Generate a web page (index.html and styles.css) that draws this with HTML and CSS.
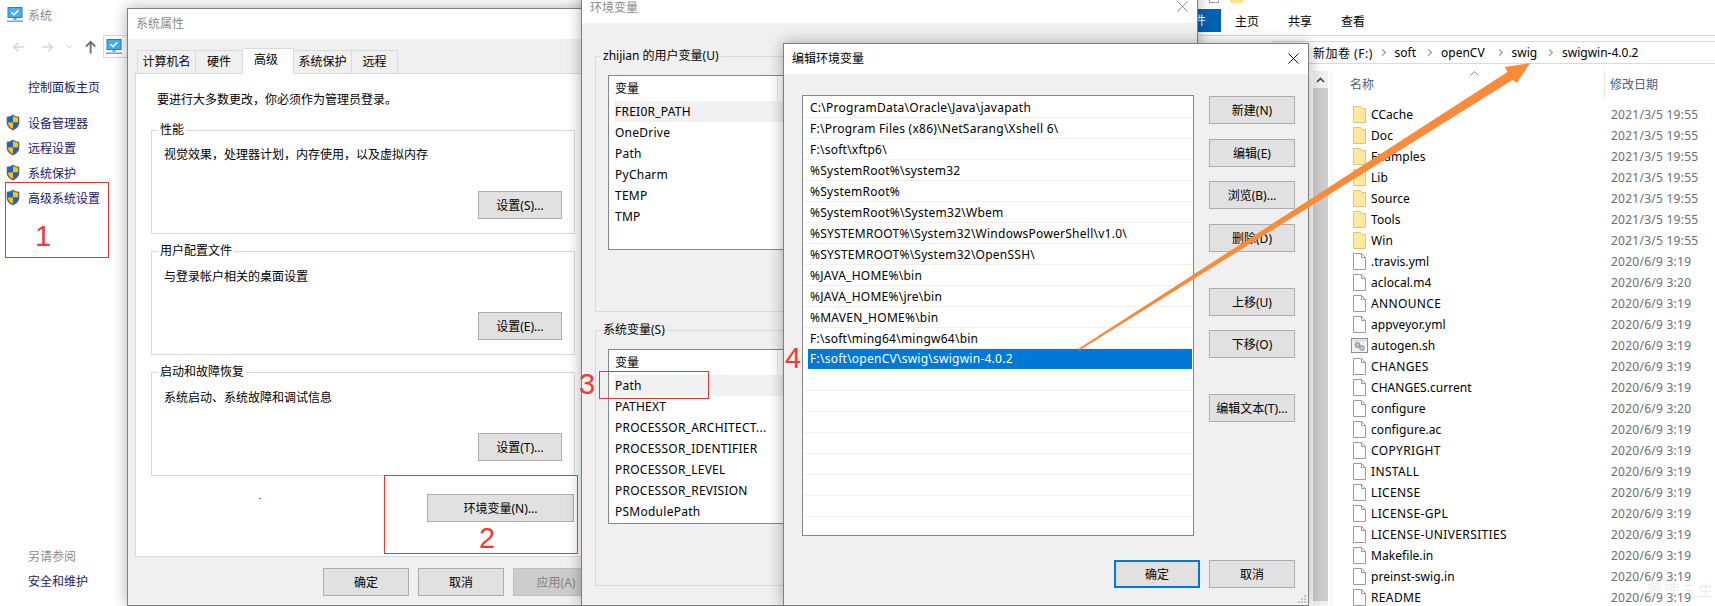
FILE: index.html
```html
<!DOCTYPE html>
<html lang="zh-CN">
<head>
<meta charset="utf-8">
<title>系统</title>
<link rel="stylesheet" href="styles.css">
</head>
<body>
<svg class="sprite" xmlns="http://www.w3.org/2000/svg">
  <symbol id="pc" viewBox="0 0 16 16">
    <rect x="1" y="0.5" width="14" height="10" fill="#46aef5" stroke="#2f7fb8"/>
    <path d="M4.5 5.2l2.5 2.5 4.5-4.5" fill="none" stroke="#fff" stroke-width="1.6"/>
    <rect x="6.5" y="11" width="3" height="2" fill="#8aa0b4"/>
    <rect x="0" y="13.5" width="16" height="1.5" fill="#8aa0b4"/>
  </symbol>
  <symbol id="shield" viewBox="0 0 14 17">
    <path d="M7 .5C5 2 3 2.6.7 2.8v6c0 3.4 2.6 6 6.3 7.7 3.7-1.700 6.300-4.300 6.300-7.700v-6C11 2.600 9 2 7 .5z" fill="#5a6470"/>
    <path d="M7 2C5.500 3 3.800 3.600 2 3.800V8.500h5z" fill="#1668c0"/>
    <path d="M7 2c1.500 1 3.200 1.600 5 1.800V8.500H7z" fill="#fcc21f"/>
    <path d="M2 8.500c0 2.900 2.100 4.900 5 6.300V8.500z" fill="#fcc21f"/>
    <path d="M12 8.500c0 2.900-2.100 4.900-5 6.300V8.500z" fill="#1668c0"/>
  </symbol>
  <symbol id="folder" viewBox="0 0 13 17">
    <path d="M.5.500h7l1.500 2h3.500v14H.5z" fill="#ffe9a1" stroke="#e2c46c"/>
  </symbol>
  <symbol id="doc" viewBox="0 0 13 17">
    <path d="M.5.500h8l4 4v12H.5z" fill="#fff" stroke="#9b9b9b"/>
    <path d="M8.500.500v4h4" fill="none" stroke="#9b9b9b"/>
  </symbol>
  <symbol id="script" viewBox="0 0 17 15">
    <rect x=".5" y=".5" width="16" height="14" fill="#f3f3f3" stroke="#8d8d8d"/>
    <rect x="1.500" y="1.500" width="14" height="2" fill="#d6dde4"/>
    <circle cx="6.500" cy="7" r="2.500" fill="#b9c2ca" stroke="#7d8a96"/>
    <circle cx="11" cy="10" r="2.300" fill="#c9d0d6" stroke="#7d8a96"/>
  </symbol>
</svg>

<main class="desktop">

  <section class="explorer">
    <div class="ex-top"><span class="qa-box"></span><span class="qa-folder"></span></div>
    <div class="ex-ribbon">
      <span class="ex-file">文件</span>
      <span class="ex-tab">主页</span>
      <span class="ex-tab">共享</span>
      <span class="ex-tab">查看</span>
    </div>
    <div class="ex-address">
      <span class="crumb crumb-drive">新加卷 (F:)</span><span class="chev"></span>
      <span class="crumb crumb-soft">soft</span><span class="chev"></span>
      <span class="crumb crumb-opencv">openCV</span><span class="chev"></span>
      <span class="crumb crumb-swig">swig</span><span class="chev"></span>
      <span class="crumb">swigwin-4.0.2</span>
    </div>
    <div class="ex-body">
      <div class="ex-scroll">
        <span class="ex-scroll-up"><svg width="9" height="6" viewBox="0 0 9 6"><path d="M1 5l3.500-3.500L8 5" fill="none" stroke="#444" stroke-width="1.600"/></svg></span>
        <span class="ex-scroll-thumb"></span>
      </div>
      <div class="ex-files">
        <div class="ex-head">
          <span class="ex-head-name">名称<svg class="caret" width="9" height="5" viewBox="0 0 9 5"><path d="M.5 4.500l4-4 4 4" fill="none" stroke="#8a8a8a"/></svg></span>
          <span class="ex-head-date">修改日期</span>
        </div>
        <div class="file"><svg class="ico"><use href="#folder"/></svg><span class="fname">CCache</span><span class="fdate">2021/3/5 19:55</span></div>
        <div class="file"><svg class="ico"><use href="#folder"/></svg><span class="fname">Doc</span><span class="fdate">2021/3/5 19:55</span></div>
        <div class="file"><svg class="ico"><use href="#folder"/></svg><span class="fname">Examples</span><span class="fdate">2021/3/5 19:55</span></div>
        <div class="file"><svg class="ico"><use href="#folder"/></svg><span class="fname">Lib</span><span class="fdate">2021/3/5 19:55</span></div>
        <div class="file"><svg class="ico"><use href="#folder"/></svg><span class="fname">Source</span><span class="fdate">2021/3/5 19:55</span></div>
        <div class="file"><svg class="ico"><use href="#folder"/></svg><span class="fname">Tools</span><span class="fdate">2021/3/5 19:55</span></div>
        <div class="file"><svg class="ico"><use href="#folder"/></svg><span class="fname">Win</span><span class="fdate">2021/3/5 19:55</span></div>
        <div class="file"><svg class="ico"><use href="#doc"/></svg><span class="fname">.travis.yml</span><span class="fdate">2020/6/9 3:19</span></div>
        <div class="file"><svg class="ico"><use href="#doc"/></svg><span class="fname">aclocal.m4</span><span class="fdate">2020/6/9 3:20</span></div>
        <div class="file"><svg class="ico"><use href="#doc"/></svg><span class="fname fname-caps">ANNOUNCE</span><span class="fdate">2020/6/9 3:19</span></div>
        <div class="file"><svg class="ico"><use href="#doc"/></svg><span class="fname">appveyor.yml</span><span class="fdate">2020/6/9 3:19</span></div>
        <div class="file"><svg class="ico ico-script"><use href="#script"/></svg><span class="fname">autogen.sh</span><span class="fdate">2020/6/9 3:19</span></div>
        <div class="file"><svg class="ico"><use href="#doc"/></svg><span class="fname fname-caps">CHANGES</span><span class="fdate">2020/6/9 3:19</span></div>
        <div class="file"><svg class="ico"><use href="#doc"/></svg><span class="fname">CHANGES.current</span><span class="fdate">2020/6/9 3:19</span></div>
        <div class="file"><svg class="ico"><use href="#doc"/></svg><span class="fname">configure</span><span class="fdate">2020/6/9 3:20</span></div>
        <div class="file"><svg class="ico"><use href="#doc"/></svg><span class="fname">configure.ac</span><span class="fdate">2020/6/9 3:19</span></div>
        <div class="file"><svg class="ico"><use href="#doc"/></svg><span class="fname fname-caps">COPYRIGHT</span><span class="fdate">2020/6/9 3:19</span></div>
        <div class="file"><svg class="ico"><use href="#doc"/></svg><span class="fname fname-caps">INSTALL</span><span class="fdate">2020/6/9 3:19</span></div>
        <div class="file"><svg class="ico"><use href="#doc"/></svg><span class="fname fname-caps">LICENSE</span><span class="fdate">2020/6/9 3:19</span></div>
        <div class="file"><svg class="ico"><use href="#doc"/></svg><span class="fname fname-caps">LICENSE-GPL</span><span class="fdate">2020/6/9 3:19</span></div>
        <div class="file"><svg class="ico"><use href="#doc"/></svg><span class="fname fname-caps">LICENSE-UNIVERSITIES</span><span class="fdate">2020/6/9 3:19</span></div>
        <div class="file"><svg class="ico"><use href="#doc"/></svg><span class="fname">Makefile.in</span><span class="fdate">2020/6/9 3:19</span></div>
        <div class="file"><svg class="ico"><use href="#doc"/></svg><span class="fname">preinst-swig.in</span><span class="fdate">2020/6/9 3:19</span></div>
        <div class="file"><svg class="ico"><use href="#doc"/></svg><span class="fname fname-caps">README</span><span class="fdate">2020/6/9 3:19</span></div>
      </div>
    </div>
    <span class="watermark">腾理三生</span>
  </section>

  <aside class="sys-side">
    <div class="side-title"><svg class="pc"><use href="#pc"/></svg><span class="inactive">系统</span></div>
    <div class="side-nav">
      <svg width="14" height="12" viewBox="0 0 14 12" class="nav-back"><path d="M13 6H2M6.500 1.500L2 6l4.500 4.500" fill="none" stroke="#d8d8d8" stroke-width="1.800"/></svg>
      <svg width="14" height="12" viewBox="0 0 14 12" class="nav-fwd"><path d="M1 6h11M7.500 1.500L12 6l-4.500 4.500" fill="none" stroke="#d8d8d8" stroke-width="1.800"/></svg>
      <svg width="7" height="5" viewBox="0 0 7 5" class="nav-down"><path d="M.5 1l3 3 3-3" fill="none" stroke="#c8c8c8"/></svg>
      <svg width="12" height="14" viewBox="0 0 12 14" class="nav-up"><path d="M6 14V2M1 6.500L6 1.500l5 5" fill="none" stroke="#6b6b6b" stroke-width="1.900"/></svg>
      <span class="nav-loc"><svg class="pc"><use href="#pc"/></svg></span>
    </div>
    <a class="side-home">控制面板主页</a>
    <ul class="side-list">
      <li><svg class="shield"><use href="#shield"/></svg>设备管理器</li>
      <li><svg class="shield"><use href="#shield"/></svg>远程设置</li>
      <li><svg class="shield"><use href="#shield"/></svg>系统保护</li>
      <li><svg class="shield"><use href="#shield"/></svg>高级系统设置</li>
    </ul>
    <div class="side-foot">
      <span class="side-see">另请参阅</span>
      <span class="side-sec">安全和维护</span>
    </div>
  </aside>

  <section class="win win-props">
    <header class="titlebar"><span class="inactive">系统属性</span></header>
    <div class="props-body">
      <div class="tabs">
        <span class="tab tab-w59">计算机名</span>
        <span class="tab tab-w47">硬件</span>
        <span class="tab tab-active">高级</span>
        <span class="tab tab-w58">系统保护</span>
        <span class="tab tab-w46">远程</span>
      </div>
      <div class="panel">
        <p class="panel-note">要进行大多数更改，你必须作为管理员登录。</p>
        <fieldset class="group group-first">
          <legend>性能</legend>
          <p class="group-text">视觉效果，处理器计划，内存使用，以及虚拟内存</p>
          <div class="group-actions"><button class="btn btn-set">设置(S)...</button></div>
        </fieldset>
        <fieldset class="group">
          <legend>用户配置文件</legend>
          <p class="group-text">与登录帐户相关的桌面设置</p>
          <div class="group-actions"><button class="btn btn-set">设置(E)...</button></div>
        </fieldset>
        <fieldset class="group">
          <legend>启动和故障恢复</legend>
          <p class="group-text">系统启动、系统故障和调试信息</p>
          <div class="group-actions"><button class="btn btn-set">设置(T)...</button></div>
        </fieldset>
        <div class="env-row"><button class="btn btn-env">环境变量(N)...</button></div>
      </div>
      <div class="props-foot">
        <button class="btn btn-foot">确定</button>
        <button class="btn btn-foot">取消</button>
        <button class="btn btn-foot btn-disabled">应用(A)</button>
      </div>
    </div>
  </section>

  <section class="win win-env">
    <header class="titlebar titlebar-env"><span class="inactive">环境变量</span>
      <svg class="close" width="11" height="11" viewBox="0 0 11 11"><path d="M.5.500l10 10M10.500.500l-10 10" stroke="#8f8f8f" fill="none"/></svg>
    </header>
    <div class="env-body">
      <fieldset class="vargroup vargroup-user">
        <legend>zhijian 的用户变量(U)</legend>
        <div class="varlist">
          <div class="varhead"><span>变量</span></div>
          <div class="var var-hl">FREI0R_PATH</div>
          <div class="var">OneDrive</div>
          <div class="var">Path</div>
          <div class="var">PyCharm</div>
          <div class="var">TEMP</div>
          <div class="var">TMP</div>
        </div>
      </fieldset>
      <fieldset class="vargroup">
        <legend>系统变量(S)</legend>
        <div class="varlist">
          <div class="varhead"><span>变量</span></div>
          <div class="var var-hl">Path</div>
          <div class="var">PATHEXT</div>
          <div class="var">PROCESSOR_ARCHITECT...</div>
          <div class="var">PROCESSOR_IDENTIFIER</div>
          <div class="var">PROCESSOR_LEVEL</div>
          <div class="var">PROCESSOR_REVISION</div>
          <div class="var">PSModulePath</div>
        </div>
      </fieldset>
    </div>
  </section>

  <section class="win win-edit">
    <header class="titlebar titlebar-edit"><span>编辑环境变量</span>
      <svg class="close" width="11" height="11" viewBox="0 0 11 11"><path d="M.5.500l10 10M10.500.500l-10 10" stroke="#111" fill="none"/></svg>
    </header>
    <div class="edit-body">
      <div class="edit-main">
        <div class="pathlist">
          <div class="path"><span>C:\ProgramData\Oracle\Java\javapath</span></div>
          <div class="path"><span>F:\Program Files (x86)\NetSarang\Xshell 6\</span></div>
          <div class="path"><span>F:\soft\xftp6\</span></div>
          <div class="path"><span>%SystemRoot%\system32</span></div>
          <div class="path"><span>%SystemRoot%</span></div>
          <div class="path"><span>%SystemRoot%\System32\Wbem</span></div>
          <div class="path"><span>%SYSTEMROOT%\System32\WindowsPowerShell\v1.0\</span></div>
          <div class="path"><span>%SYSTEMROOT%\System32\OpenSSH\</span></div>
          <div class="path"><span>%JAVA_HOME%\bin</span></div>
          <div class="path"><span>%JAVA_HOME%\jre\bin</span></div>
          <div class="path"><span>%MAVEN_HOME%\bin</span></div>
          <div class="path"><span>F:\soft\ming64\mingw64\bin</span></div>
          <div class="path path-selected"><span>F:\soft\openCV\swig\swigwin-4.0.2</span></div>
          <div class="path"></div><div class="path"></div><div class="path"></div><div class="path"></div><div class="path"></div><div class="path"></div><div class="path"></div>
        </div>
        <div class="edit-actions">
          <button class="btn btn-edit">新建(N)</button>
          <button class="btn btn-edit">编辑(E)</button>
          <button class="btn btn-edit">浏览(B)...</button>
          <button class="btn btn-edit">删除(D)</button>
          <button class="btn btn-edit btn-break">上移(U)</button>
          <button class="btn btn-edit">下移(O)</button>
          <button class="btn btn-edit btn-break">编辑文本(T)...</button>
        </div>
      </div>
      <div class="edit-foot">
        <button class="btn btn-edit btn-default">确定</button>
        <button class="btn btn-edit">取消</button>
      </div>
    </div>
    <svg class="grip" width="10" height="10" viewBox="0 0 10 10"><path d="M7 1h2v2H7zM4 4h2v2H4zM7 4h2v2H7zM1 7h2v2H1zM4 7h2v2H4zM7 7h2v2H7z" fill="#c4c4c4"/></svg>
  </section>

  <span class="mark mark-1"></span>
  <span class="num num-1">1</span>
  <span class="mark mark-2"></span>
  <span class="num num-2">2</span>
  <span class="mark mark-3"></span>
  <span class="num num-3">3</span>
  <span class="num num-4">4</span>
  <span class="speck"></span>

  <svg class="arrow" width="1715" height="606" viewBox="0 0 1715 606">
    <polygon points="1078,349 1507.500,72 1505,67 1530,63 1517,83 1512.500,80 1080,350" fill="#f98b3a"/>
  </svg>
</main>
</body>
</html>
```

FILE: styles.css
```css
* { box-sizing: border-box; }
html, body { margin: 0; padding: 0; }
body {
  font-family: "Noto Sans", "Noto Sans CJK SC", sans-serif;
  font-size: 12px;
  color: #000;
  background: #fff;
}
p, ul { margin: 0; padding: 0; }
.sprite { display: none; }
.desktop {
  position: relative;
  width: 1715px;
  height: 606px;
  overflow: hidden;
  background: #fff;
}
.inactive { color: #8c8c8c; }

/* windows on the desktop */
.win {
  position: absolute;
  background: #f0f0f0;
  border: 1px solid #7f8084;
  box-shadow: 0 0 14px rgba(0, 0, 0, .32);
  display: flex;
  flex-direction: column;
}
.titlebar {
  height: 30px;
  flex: none;
  background: #fff;
  display: flex;
  align-items: center;
  justify-content: space-between;
  padding: 0 10px 2px 8px;
}
.btn {
  font: inherit;
  color: #000;
  background: #e1e1e1;
  border: 1px solid #adadad;
  height: 28px;
  padding: 0;
  flex: none;
}

/* left: system control panel */
.sys-side {
  position: absolute;
  left: 0;
  top: 0;
  width: 128px;
  height: 606px;
  display: flex;
  flex-direction: column;
  background: #fff;
}
.pc { width: 16px; height: 16px; display: block; flex: none; }
.side-title {
  height: 30px;
  padding-left: 7px;
  display: flex;
  align-items: center;
  gap: 5px;
}
.side-nav {
  height: 23px;
  margin-top: 5px;
  display: flex;
  align-items: center;
  padding-left: 12px;
}
.nav-fwd { margin-left: 16px; }
.nav-down { margin-left: 12px; }
.nav-up { margin-left: 12px; }
.nav-loc {
  margin-left: 7px;
  height: 23px;
  width: 26px;
  border: 1px solid #d9d9d9;
  display: flex;
  align-items: center;
  padding-left: 2px;
}
.side-home {
  display: block;
  margin: 20px 0 0 28px;
  line-height: 20px;
  color: #1a1a66;
}
.side-list {
  list-style: none;
  margin-top: 12px;
  padding-left: 6px;
  color: #1a1a66;
}
.side-list li {
  height: 25px;
  display: flex;
  align-items: center;
  gap: 8px;
}
.shield { width: 14px; height: 17px; flex: none; }
.side-foot {
  margin-top: auto;
  padding: 0 0 12px 28px;
  display: flex;
  flex-direction: column;
}
.side-foot span { height: 25px; line-height: 25px; }
.side-see { color: #8c8c8c; }
.side-sec { color: #1a1a66; }

/* system properties */
.win-props { left: 127px; top: 8px; width: 480px; height: 598px; }
.props-body { flex: 1; padding: 9px 0 0 7px; }
.tabs {
  display: flex;
  align-items: flex-end;
  height: 25px;
  margin-left: 2px;
  position: relative;
  z-index: 1;
}
.tab {
  height: 23px;
  line-height: 22px;
  border: 1px solid #d9d9d9;
  border-bottom: 0;
  border-left: 0;
  background: #f0f0f0;
  text-align: center;
  flex: none;
}
.tab-w59 { width: 59px; border-left: 1px solid #d9d9d9; }
.tab-w47 { width: 47px; }
.tab-w58 { width: 58px; }
.tab-w46 { width: 46px; }
.tab-active {
  width: 51px;
  height: 26px;
  margin-bottom: -1px;
  line-height: 22px;
  background: #fff;
  padding-right: 4px;
}
.panel {
  width: 470px;
  height: 484px;
  background: #fff;
  border: 1px solid #d9d9d9;
  padding: 16px 0 0 15px;
}
.panel-note { line-height: 20px; margin-left: 6px; }
.group {
  width: 424px;
  height: 112px;
  margin: 9px 0 0;
  padding: 0 12px 0 12px;
  border: 1px solid #d9d9d9;
  min-width: 0;
}
.group-first { margin-top: 12px; }
.group legend {
  padding: 0 2px;
  margin-left: -6px;
  line-height: 16px;
}
.vargroup legend {
  padding: 0 2px;
  margin-left: -7px;
  line-height: 16px;
}
.group-text { line-height: 16px; padding-top: 10px; }
.group-actions {
  margin-top: 27px;
  display: flex;
  justify-content: flex-end;
}
.group-first .group-text { padding-top: 9px; }
.group-first .group-actions { margin-top: 28px; }
.btn-set { width: 84px; }
.env-row {
  width: 424px;
  margin-top: 18px;
  padding-right: 1px;
  display: flex;
  justify-content: flex-end;
}
.btn-env { width: 147px; }
.props-foot {
  margin: 11px 0 0 188px;
  display: flex;
  gap: 9px;
}
.btn-foot { width: 86px; }
.btn-disabled { background: #ccc; border-color: #bfbfbf; color: #838383; }

/* environment variables */
.win-env { left: 581px; top: -8px; width: 617px; height: 614px; }
.titlebar-env { padding-right: 9px; padding-bottom: 3px; }
.env-body { flex: 1; padding: 25px 0 0 13px; }
.vargroup {
  width: 590px;
  height: 264px;
  margin: 10px 0 0;
  padding: 11px 0 0 12px;
  border: 1px solid #d9d9d9;
  min-width: 0;
}
.vargroup-user { margin-top: 0; }
.varlist {
  width: 560px;
  height: 175px;
  background: #fff;
  border: 1px solid #828790;
  padding-left: 5px;
}
.varhead {
  height: 25px;
  line-height: 25px;
  padding-left: 1px;
  width: 164px;
  border-right: 1px solid #e5e5e5;
}
.var {
  height: 21px;
  line-height: 21px;
  padding-left: 1px;
  letter-spacing: .25px;
}
.var-hl { background: #f1f1f1; }

/* edit dialog */
.win-edit { left: 783px; top: 43px; width: 526px; height: 563px; }
.titlebar-edit { padding-right: 9px; }
.edit-body { flex: 1; padding: 21px 13px 0 18px; }
.edit-main { display: flex; gap: 15px; }
.pathlist {
  width: 392px;
  height: 441px;
  background: #fff;
  border: 1px solid #828790;
  padding: 1px 1px 0;
  flex: none;
}
.path {
  height: 21px;
  line-height: 21px;
  padding-left: 4px;
  border-bottom: 1px solid #f0f0f0;
  display: flex;
  letter-spacing: .25px;
}
.path span { flex: 1; padding-left: 2px; white-space: nowrap; }
.path-selected { border-bottom-color: #fff; line-height: 20px; }
.path-selected span { background: #0078d7; color: #fff; }
.edit-actions {
  padding-top: 1px;
  display: flex;
  flex-direction: column;
  gap: 14.5px;
}
.btn-edit { width: 86px; }
.btn-break { margin-top: 21.5px; }
.edit-foot {
  margin-top: 24px;
  display: flex;
  justify-content: flex-end;
  gap: 9px;
}
.btn-default { border: 2px solid #0078d7; }
.grip { position: absolute; right: 1px; bottom: 1px; }

/* explorer behind the dialogs */
.explorer {
  position: absolute;
  left: 1150px;
  top: 0;
  width: 565px;
  height: 606px;
  background: #fff;
  overflow: hidden;
}
.ex-top {
  height: 9px;
  padding-left: 59px;
  display: flex;
  gap: 11px;
}
.qa-box { width: 10px; height: 3px; border: 1px solid #9a9a9a; border-top: 0; }
.qa-folder { width: 13px; height: 3px; background: #ffe08a; }
.ex-ribbon {
  height: 27px;
  border-bottom: 1px solid #dadada;
  display: flex;
  gap: 29px;
}
.ex-file {
  width: 71px;
  height: 23px;
  line-height: 23px;
  background: #0063b1;
  color: #fff;
  padding-left: 32px;
  margin-right: -15px;
}
.ex-tab { line-height: 26px; width: 24px; flex: none; }
.ex-address {
  height: 23px;
  margin: 5px 0 0 122px;
  border-top: 1px solid #dadada;
  border-bottom: 1px solid #dadada;
  border-left: 1px solid #dadada;
  display: flex;
  align-items: center;
  padding-left: 40px;
}
.crumb { white-space: nowrap; }
.crumb-drive { width: 66.5px; letter-spacing: .5px; }
.crumb-soft { width: 31.5px; }
.crumb-opencv { width: 55.5px; }
.crumb-swig { width: 35.5px; }
.chev {
  width: 5px;
  height: 5px;
  border-top: 1.5px solid #8a8a8a;
  border-right: 1.5px solid #8a8a8a;
  transform: rotate(45deg);
  flex: none;
}
.chev + .crumb { margin-left: 10px; }
.ex-body {
  display: flex;
  margin-top: 7px;
  height: 535px;
  padding-left: 163px;
}
.ex-scroll {
  width: 15px;
  flex: none;
  background: #f0f0f0;
  display: flex;
  flex-direction: column;
}
.ex-scroll-up {
  height: 17px;
  display: flex;
  align-items: center;
  justify-content: center;
}
.ex-scroll-thumb { height: 513px; background: #cdcdcd; }
.ex-files {
  flex: 1;
  margin-left: 3px;
  border-left: 1px solid #f0f0f0;
  padding-left: 18px;
}
.ex-head {
  height: 33px;
  display: flex;
  color: #4c607a;
}
.ex-head-name {
  width: 255px;
  height: 27px;
  line-height: 27px;
  border-right: 1px solid #e5e5e5;
  position: relative;
}
.caret { position: absolute; left: 120px; top: 0; }
.ex-head-date { line-height: 27px; padding-left: 5px; }
.file {
  height: 21px;
  display: flex;
  align-items: center;
  white-space: nowrap;
}
.ico { width: 13px; height: 17px; flex: none; margin-left: 3px; }
.ico-script { width: 17px; height: 15px; margin-left: 1px; margin-right: -2px; }
.fname { width: 240px; margin-left: 5px; letter-spacing: .06px; }
.fname-caps { letter-spacing: .36px; }
.fdate { color: #6d6d6d; letter-spacing: .25px; }
.watermark {
  position: absolute;
  left: 497px;
  top: 579px;
  font-size: 15px;
  letter-spacing: 2px;
  color: rgba(200, 200, 200, .35);
}

/* red annotations and arrow on top of the screenshot */
.mark { position: absolute; border: 1px solid #ee3333; }
.mark-1 { left: 5px; top: 182px; width: 104px; height: 76px; }
.mark-2 { left: 384px; top: 475px; width: 194px; height: 79px; }
.mark-3 { left: 599px; top: 371px; width: 110px; height: 28px; }
.num {
  position: absolute;
  font-family: "Liberation Sans", sans-serif;
  font-size: 29px;
  line-height: 28px;
  color: #f03a3a;
  transform: translateX(-50%);
}
.num-1 { left: 43px; top: 222px; }
.num-2 { left: 487px; top: 524px; }
.num-3 { left: 587px; top: 370px; }
.num-4 { left: 793px; top: 344px; }
.speck { position: absolute; left: 259px; top: 498px; width: 2px; height: 1px; background: #e33; }
.arrow { position: absolute; left: 0; top: 0; pointer-events: none; }
```
